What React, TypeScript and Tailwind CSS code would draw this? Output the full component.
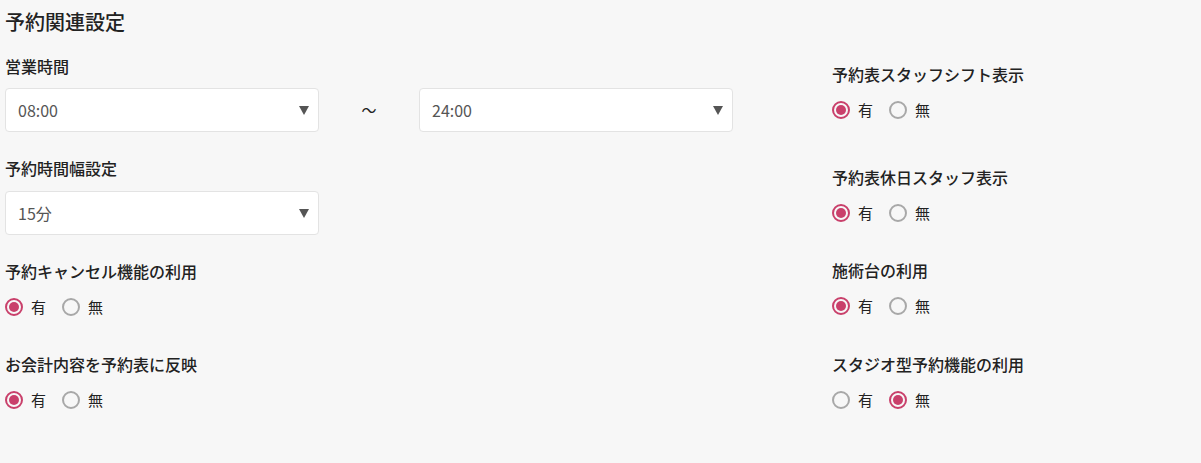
import React, { useState } from "react";

const font = { fontFamily: '"Noto Sans CJK JP", "Noto Sans", sans-serif' };

const SelectBox: React.FC<{ value: string; className?: string }> = ({ value, className = "" }) => (
  <div
    className={`flex h-[44px] w-[314px] items-center justify-between rounded-[4px] border border-[#e3e3e3] bg-white pl-[12px] pr-[9px] text-[16px] text-[#555] ${className}`}
  >
    <span>{value}</span>
    <svg width="10" height="9" viewBox="0 0 10 9">
      <path d="M0 0 H10 L5 9 Z" fill="#555" />
    </svg>
  </div>
);

const RadioGroup: React.FC<{ initial: "yes" | "no" }> = ({ initial }) => {
  const [val, setVal] = useState(initial);
  const opts: { key: "yes" | "no"; label: string }[] = [
    { key: "yes", label: "有" },
    { key: "no", label: "無" },
  ];
  return (
    <div className="flex h-5 items-center gap-[16px] text-[15px] text-[#222]">
      {opts.map((o) => (
        <button key={o.key} onClick={() => setVal(o.key)} className="flex items-center gap-[8px]">
          {val === o.key ? (
            <span className="flex h-[18px] w-[18px] items-center justify-center rounded-full border-2 border-[#c9406b]">
              <span className="h-[10px] w-[10px] rounded-full bg-[#c9406b]" />
            </span>
          ) : (
            <span className="h-[18px] w-[18px] rounded-full border-2 border-[#a8a8a8]" />
          )}
          <span>{o.label}</span>
        </button>
      ))}
    </div>
  );
};

const Label: React.FC<{ children: React.ReactNode; className?: string }> = ({ children, className = "" }) => (
  <div className={`h-5 text-[16px] font-medium leading-5 text-[#222] ${className}`}>{children}</div>
);

export default function App() {
  return (
    <div style={font} className="flex min-h-screen bg-[#f7f7f7] pl-[5px]">
      {/* left column */}
      <div className="w-[827px] pt-[9px]">
        <h2 className="h-[26px] text-[20px] font-medium leading-[26px] text-[#222]">予約関連設定</h2>

        <Label className="mt-[21px]">営業時間</Label>
        <div className="mt-[12px] flex items-center">
          <SelectBox value="08:00" />
          <span className="w-[100px] text-center text-[15px] text-[#222]">～</span>
          <SelectBox value="24:00" />
        </div>

        <Label className="mt-[26px]">予約時間幅設定</Label>
        <SelectBox value="15分" className="mt-[13px]" />

        <Label className="mt-[26px]">予約キャンセル機能の利用</Label>
        <div className="mt-[16px]">
          <RadioGroup initial="yes" />
        </div>

        <Label className="mt-[37px]">お会計内容を予約表に反映</Label>
        <div className="mt-[16px]">
          <RadioGroup initial="yes" />
        </div>
      </div>

      {/* right column */}
      <div className="pt-[64px]">
        <Label>予約表スタッフシフト表示</Label>
        <div className="mt-[16px]">
          <RadioGroup initial="yes" />
        </div>

        <Label className="mt-[47px]">予約表休日スタッフ表示</Label>
        <div className="mt-[16px]">
          <RadioGroup initial="yes" />
        </div>

        <Label className="mt-[37px]">施術台の利用</Label>
        <div className="mt-[16px]">
          <RadioGroup initial="yes" />
        </div>

        <Label className="mt-[38px]">スタジオ型予約機能の利用</Label>
        <div className="mt-[16px]">
          <RadioGroup initial="no" />
        </div>
      </div>
    </div>
  );
}
